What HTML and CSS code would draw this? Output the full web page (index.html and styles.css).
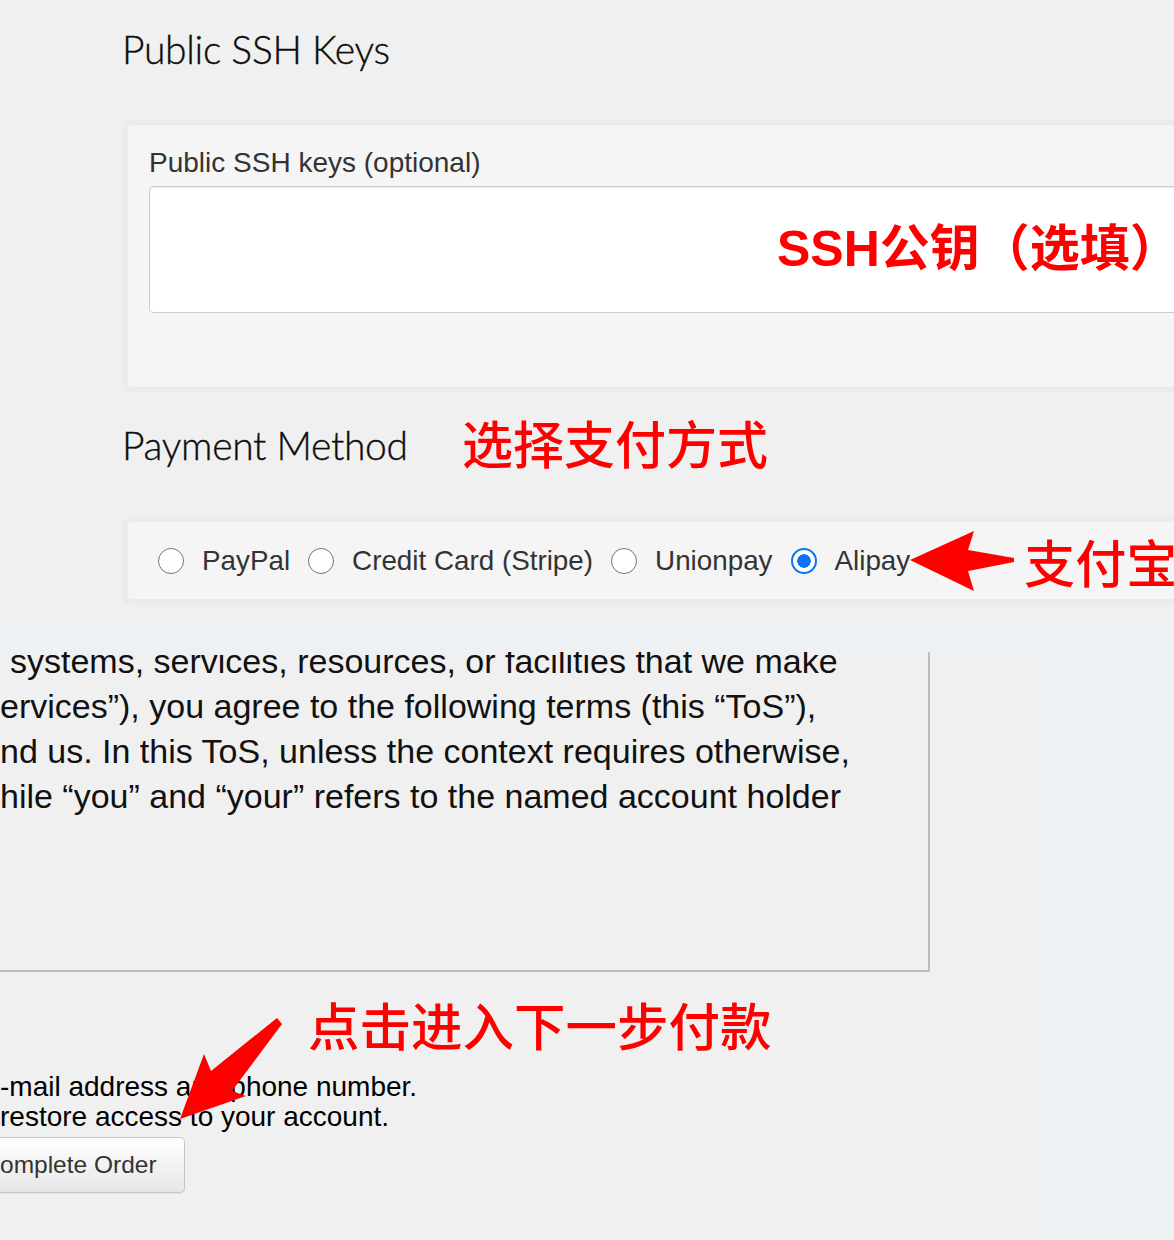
FILE: index.html
```html
<!DOCTYPE html>
<html lang="en">
<head>
<meta charset="utf-8">
<title>Order</title>
<link rel="stylesheet" href="styles.css">
</head>
<body>
<div class="page">
  <section class="top">
    <h2 class="heading">Public SSH Keys</h2>
    <div class="card card-ssh">
      <label class="field-label" for="ssh">Public SSH keys (optional)</label>
      <div class="ta-wrap">
        <textarea id="ssh" class="ssh-input"></textarea>
        <span class="note note-ssh">SSH公钥（选填）</span>
      </div>
    </div>
    <div class="heading-row">
      <h2 class="heading">Payment Method</h2>
      <span class="note note-pay">选择支付方式</span>
    </div>
    <div class="card card-pay">
      <label class="radio-option"><input type="radio" name="pm"><span>PayPal</span></label>
      <label class="radio-option"><input type="radio" name="pm"><span>Credit Card (Stripe)</span></label>
      <label class="radio-option"><input type="radio" name="pm"><span>Unionpay</span></label>
      <label class="radio-option last"><input type="radio" name="pm" checked><span>Alipay</span></label>
      <svg class="arrow-left" width="104" height="62" viewBox="0 0 104 62" aria-hidden="true">
        <polygon points="0,30 64,1 58,20 104,28 104,32 58,41 64,61" fill="#fe0000"/>
      </svg>
      <span class="note note-alipay">支付宝</span>
    </div>
  </section>
  <section class="bottom">
    <div class="column">
      <div class="terms">
        <div class="terms-text">
          <div class="line first">systems, services, resources, or facilities that we make</div>
          <div class="line">ervices”), you agree to the following terms (this “ToS”),</div>
          <div class="line">nd us. In this ToS, unless the context requires otherwise,</div>
          <div class="line">hile “you” and “your” refers to the named account holder</div>
        </div>
      </div>
      <p class="account-note">-mail address and phone number.<br>restore access to your account.</p>
      <button class="btn" type="button">omplete Order</button>
      <span class="note note-next">点击进入下一步付款</span>
      <svg class="arrow-down" width="106" height="104" viewBox="0 0 106 104" aria-hidden="true">
        <polygon points="2,103 26,38 33,55 99,2 104,8 54,75 68,80" fill="#fe0000"/>
      </svg>
    </div>
  </section>
</div>
</body>
</html>
```
FILE: styles.css
```css
html, body {
  margin: 0;
  padding: 0;
  overflow: hidden;
}

body {
  width: 1174px;
  height: 1240px;
  font-family: "Liberation Sans", Arial, sans-serif;
}

.page {
  width: 1174px;
  height: 1240px;
  overflow: hidden;
}

/* ---------- top part ---------- */
.top {
  height: 630px;
  box-sizing: border-box;
  padding: 25px 0 0 122px;
  background: #f0f0f0;
}

.heading {
  margin: 0;
  font-family: "Lato", "Open Sans", sans-serif;
  font-weight: 300;
  font-size: 39px;
  line-height: 48px;
  letter-spacing: -0.3px;
  color: #0d0d0d;
  -webkit-text-stroke: 0.35px #0d0d0d;
  white-space: nowrap;
}

.card {
  box-sizing: border-box;
  width: 1100px;
  border: 6px solid #ebebeb;
  border-radius: 9px;
  background: #f5f5f5;
}

.card-ssh {
  margin-top: 46px;
  height: 274px;
  padding: 22px 0 0 21px;
}

.field-label {
  display: block;
  font-size: 28px;
  line-height: 32px;
  color: #333;
}

.ta-wrap {
  position: relative;
  margin-top: 7px;
}

.ssh-input {
  display: block;
  box-sizing: border-box;
  width: 100%;
  height: 127px;
  margin: 0;
  border: 1px solid #cccccc;
  border-radius: 4px;
  background: #fff;
  box-shadow: inset 0 1px 1px rgba(0, 0, 0, 0.075);
  resize: none;
}

.note {
  color: #fe0000;
  font-family: "Noto Sans CJK SC", sans-serif;
  font-weight: 500;
  white-space: nowrap;
}

.note-ssh {
  position: absolute;
  left: 628px;
  top: 38px;
  font-family: "Liberation Sans", "Noto Sans CJK SC", sans-serif;
  font-weight: 700;
  font-size: 50px;
  line-height: 51px;
}

.heading-row {
  display: grid;
  grid-template-columns: 340px auto;
  align-items: start;
  margin-top: 28px;
  height: 48px;
}

.note-pay {
  font-size: 51px;
  line-height: 48px;
  margin-top: -3px;
}

.card-pay {
  display: flex;
  align-items: center;
  margin-top: 47px;
  height: 89px;
  padding-left: 30px;
}

.radio-option {
  display: flex;
  align-items: center;
  gap: 18px;
  margin-right: 18px;
  font-size: 27.8px;
  line-height: 32px;
  color: #333;
}

.radio-option.last {
  margin-right: 0;
}

.radio-option input {
  appearance: none;
  -webkit-appearance: none;
  box-sizing: border-box;
  width: 26px;
  height: 26px;
  margin: 0;
  border: 1.5px solid #767676;
  border-radius: 50%;
  background: #fff;
}

.radio-option input:checked {
  border: 2px solid #0a74f5;
  background: radial-gradient(circle, #0a74f5 0 6.5px, #fff 7px);
}

.arrow-left {
  display: block;
  flex: none;
  margin-right: 10px;
}

.note-alipay {
  font-size: 51px;
  line-height: 56px;
}

/* ---------- bottom part ---------- */
.bottom {
  height: 610px;
  box-sizing: border-box;
  padding-top: 22px;
  background: #edf1f3;
}

.column {
  position: relative;
  width: 1046px;
  height: 588px;
  background: #f0f0f0;
}

.terms {
  box-sizing: border-box;
  width: 950px;
  height: 320px;
  margin-left: -20px;
  padding-left: 18px;
  border: 2px solid #bdbdbd;
  border-top: none;
  overflow: hidden;
}

.terms-text {
  margin-top: -13px;
  font-size: 34px;
  line-height: 45px;
  color: #111;
  white-space: nowrap;
}

.line.first {
  padding-left: 10px;
}

.account-note {
  margin: 100px 0 0;
  font-size: 28px;
  line-height: 30px;
  color: #000;
  white-space: nowrap;
}

.btn {
  display: block;
  box-sizing: border-box;
  height: 56px;
  margin: 5px 0 0 -30px;
  padding: 0 27px 0 29px;
  border: 1px solid #c6c6c6;
  border-radius: 5px;
  background: linear-gradient(#ffffff, #e6e6e6);
  box-shadow: 0 1px 1px rgba(0, 0, 0, 0.06);
  font-family: "Liberation Sans", Arial, sans-serif;
  font-size: 24.5px;
  color: #333;
}

.note-next {
  position: absolute;
  left: 308px;
  top: 346px;
  font-size: 51.5px;
  line-height: 51px;
}

.arrow-down {
  position: absolute;
  left: 178px;
  top: 364px;
}
```
